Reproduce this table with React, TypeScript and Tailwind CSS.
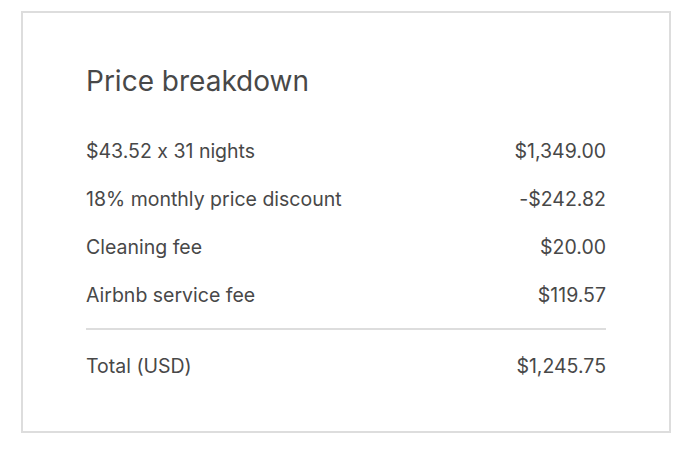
const rows = [
  { label: "$43.52 x 31 nights", value: "$1,349.00" },
  { label: "18% monthly price discount", value: "-$242.82" },
  { label: "Cleaning fee", value: "$20.00" },
  { label: "Airbnb service fee", value: "$119.57" },
]

export default function App() {
  return (
    <div className="w-[700px] h-[455px] bg-white pt-[11px] pl-[21px] font-['Inter',sans-serif] [font-feature-settings:'calt'_0] text-[#484848]">
      <div className="w-[650px] h-[422px] border-2 border-[#dddddd] px-[63px] pt-[50px]">
        <h2 className="text-[28px] leading-[36px] font-normal">Price breakdown</h2>
        <div className="mt-[29px] flex flex-col">
          {rows.map((row) => (
            <div key={row.label} className="flex justify-between items-center h-[48px] text-[19.5px]">
              <span>{row.label}</span>
              <span>{row.value}</span>
            </div>
          ))}
        </div>
        <div className="mt-[8px] border-t-2 border-[#dddddd]" />
        <div className="flex justify-between items-center h-[74px] text-[19.5px]">
          <span>Total (USD)</span>
          <span>$1,245.75</span>
        </div>
      </div>
    </div>
  )
}
